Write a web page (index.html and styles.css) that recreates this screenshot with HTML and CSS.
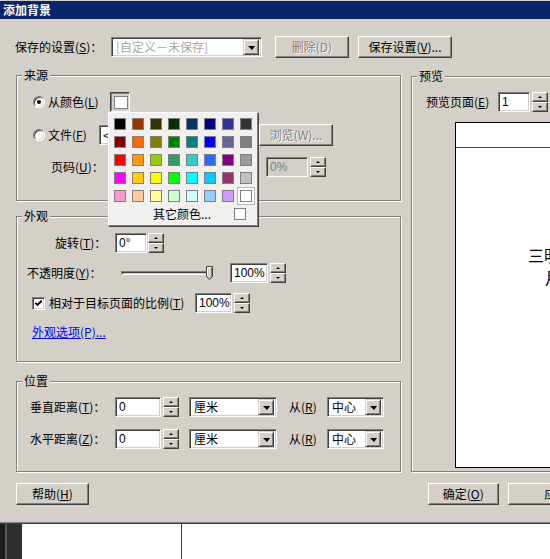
FILE: index.html
```html
<!DOCTYPE html>
<html>
<head>
<meta charset="utf-8">
<title>添加背景</title>
<link rel="stylesheet" href="styles.css">
</head>
<body>
<div class="window">
  <div class="titlebar">添加背景</div>
  <div class="client">
    <div class="toprow">
      <span class="lbl-saved">保存的设置(<u>S</u>)：</span>
      <div class="combo sunken combo-saved"><span class="ctext ctext-dis">[自定义－未保存]</span><span class="ddbtn"><i class="tri"></i></span></div>
      <button class="btn btn-del"><span class="dis">删除(D)</span></button>
      <button class="btn btn-save">保存设置(<u>V</u>)...</button>
    </div>

    <div class="main">
      <div class="leftcol">
        <fieldset class="group g-source">
          <legend class="legend">来源</legend>
          <div class="row r-color">
            <span class="radio"><span class="dot"></span></span>
            <span class="opt-label ol-color">从颜色(<u>L</u>)</span>
            <div class="colorbtn">
              <span class="colorbtn-sw"></span>
              <div class="palette">
                <div class="swatches">
                  <span class="sw" style="background:#000000"></span>
                  <span class="sw" style="background:#993300"></span>
                  <span class="sw" style="background:#333300"></span>
                  <span class="sw" style="background:#003300"></span>
                  <span class="sw" style="background:#003366"></span>
                  <span class="sw" style="background:#000080"></span>
                  <span class="sw" style="background:#333399"></span>
                  <span class="sw" style="background:#333333"></span>
                  <span class="sw" style="background:#800000"></span>
                  <span class="sw" style="background:#ff6600"></span>
                  <span class="sw" style="background:#808000"></span>
                  <span class="sw" style="background:#008000"></span>
                  <span class="sw" style="background:#008080"></span>
                  <span class="sw" style="background:#0000ff"></span>
                  <span class="sw" style="background:#666699"></span>
                  <span class="sw" style="background:#808080"></span>
                  <span class="sw" style="background:#ff0000"></span>
                  <span class="sw" style="background:#ff9900"></span>
                  <span class="sw" style="background:#99cc00"></span>
                  <span class="sw" style="background:#339966"></span>
                  <span class="sw" style="background:#33cccc"></span>
                  <span class="sw" style="background:#3366ff"></span>
                  <span class="sw" style="background:#800080"></span>
                  <span class="sw" style="background:#999999"></span>
                  <span class="sw" style="background:#ff00ff"></span>
                  <span class="sw" style="background:#ffcc00"></span>
                  <span class="sw" style="background:#ffff00"></span>
                  <span class="sw" style="background:#00ff00"></span>
                  <span class="sw" style="background:#00ffff"></span>
                  <span class="sw" style="background:#00ccff"></span>
                  <span class="sw" style="background:#993366"></span>
                  <span class="sw" style="background:#c0c0c0"></span>
                  <span class="sw" style="background:#ff99cc"></span>
                  <span class="sw" style="background:#ffcc99"></span>
                  <span class="sw" style="background:#ffff99"></span>
                  <span class="sw" style="background:#ccffcc"></span>
                  <span class="sw" style="background:#ccffff"></span>
                  <span class="sw" style="background:#99ccff"></span>
                  <span class="sw" style="background:#cc99ff"></span>
                  <span class="sw sw-sel" style="background:#ffffff"></span>
                </div>
                <div class="pal-more">
                  <span class="pal-more-text">其它颜色...</span>
                  <span class="pal-more-sw"></span>
                </div>
              </div>
            </div>
          </div>
          <div class="row r-file">
            <span class="radio"></span>
            <span class="opt-label ol-file">文件(<u>F</u>)</span>
            <div class="field sunken f-file"><span class="ftext">&lt;无&gt;</span></div>
            <button class="btn btn-browse"><span class="dis">浏览(W)...</span></button>
          </div>
          <div class="row r-page">
            <span class="lbl-page">页码(<u>U</u>)：</span>
            <div class="field sunken field-dis f-pct"><span class="ftext dis-plain">0%</span></div>
            <div class="spin"><span class="spin-btn"><i class="up"></i></span><span class="spin-btn"><i class="down"></i></span></div>
          </div>
        </fieldset>

        <fieldset class="group g-look">
          <legend class="legend">外观</legend>
          <div class="row r-rot">
            <span class="lbl-rot">旋转(<u>T</u>)：</span>
            <div class="field sunken f-rot"><span class="ftext">0°</span></div>
            <div class="spin spin-gap1"><span class="spin-btn"><i class="up"></i></span><span class="spin-btn"><i class="down"></i></span></div>
          </div>
          <div class="row r-opa">
            <span class="lbl-opa">不透明度(<u>Y</u>)：</span>
            <div class="slider">
              <span class="track"></span>
              <svg class="thumb" width="7" height="14" viewBox="0 0 7 14"><path d="M0.5 0.5H6.5V10.5L3.5 13.5L0.5 10.5Z" fill="#d4d0c8" stroke="#404040"/><path d="M1.5 10V1.5H5.5" fill="none" stroke="#ffffff"/><path d="M5.5 1.5V10.2L3.5 12.2" fill="none" stroke="#808080"/></svg>
            </div>
            <div class="field sunken f-opa"><span class="ftext">100%</span></div>
            <div class="spin spin-gap2"><span class="spin-btn"><i class="up"></i></span><span class="spin-btn"><i class="down"></i></span></div>
          </div>
          <div class="row r-chk">
            <span class="checkbox"><svg width="7" height="7" viewBox="0 0 7 7"><path d="M0.3 2.8L2.5 5L6.8 0.7" fill="none" stroke="#000" stroke-width="1.9"/></svg></span>
            <span class="lbl-chk">相对于目标页面的比例(<u>T</u>)</span>
            <div class="field sunken f-scale"><span class="ftext">100%</span></div>
            <div class="spin spin-gap2"><span class="spin-btn"><i class="up"></i></span><span class="spin-btn"><i class="down"></i></span></div>
          </div>
          <div class="row r-link">
            <a class="link" href="#">外观选项(P)...</a>
          </div>
        </fieldset>

        <fieldset class="group g-pos">
          <legend class="legend">位置</legend>
          <div class="row r-pos1">
            <span class="lbl-pos">垂直距离(<u>T</u>)：</span>
            <div class="field sunken f-dist"><span class="ftext">0</span></div>
            <div class="spin spin-gap2"><span class="spin-btn"><i class="up"></i></span><span class="spin-btn"><i class="down"></i></span></div>
            <div class="combo sunken combo-unit"><span class="ctext">厘米</span><span class="ddbtn"><i class="tri"></i></span></div>
            <span class="lbl-from">从(<u>R</u>)</span>
            <div class="combo sunken combo-from"><span class="ctext">中心</span><span class="ddbtn"><i class="tri"></i></span></div>
          </div>
          <div class="row r-pos2">
            <span class="lbl-pos">水平距离(<u>Z</u>)：</span>
            <div class="field sunken f-dist"><span class="ftext">0</span></div>
            <div class="spin spin-gap2"><span class="spin-btn"><i class="up"></i></span><span class="spin-btn"><i class="down"></i></span></div>
            <div class="combo sunken combo-unit"><span class="ctext">厘米</span><span class="ddbtn"><i class="tri"></i></span></div>
            <span class="lbl-from">从(<u>R</u>)</span>
            <div class="combo sunken combo-from"><span class="ctext">中心</span><span class="ddbtn"><i class="tri"></i></span></div>
          </div>
        </fieldset>
      </div>

      <fieldset class="group g-preview">
        <legend class="legend">预览</legend>
        <div class="row r-prev">
          <span class="lbl-prev">预览页面(<u>E</u>)</span>
          <div class="field sunken f-page"><span class="ftext">1</span></div>
          <div class="spin spin-gap2"><span class="spin-btn"><i class="up"></i></span><span class="spin-btn"><i class="down"></i></span></div>
        </div>
        <div class="page">
          <div class="page-head"></div>
          <div class="page-text">
            <div class="pt1">三明</div>
            <div class="pt2">月</div>
          </div>
        </div>
      </fieldset>
    </div>

    <div class="bottomrow">
      <button class="btn btn-help">帮助(<u>H</u>)</button>
      <button class="btn btn-ok">确定(<u>O</u>)</button>
      <button class="btn btn-cancel">应用(<u>A</u>)</button>
    </div>
  </div>
</div>
<div class="below">
  <span class="bl1"></span><span class="bl2"></span><span class="bl3"></span>
  <div class="bl4"><span class="bl-line"></span></div>
</div>
</body>
</html>
```

FILE: styles.css
```css
* { box-sizing: border-box; }
html, body { margin: 0; padding: 0; }
body {
  width: 550px;
  height: 559px;
  overflow: hidden;
  background: #d4d0c8;
  font: 12px/14px "Noto Sans CJK SC", "Liberation Sans", sans-serif;
  color: #000;
}
u { text-decoration: underline; }

.window {
  width: 620px;
  height: 524px;
  padding-top: 1px;
  background: #d4d0c8;
  border-bottom: 1px solid #404040;
  box-shadow: inset 0 -1px 0 #808080;
}
.titlebar {
  height: 18px;
  line-height: 18px;
  background: #0a246a;
  color: #fff;
  font-weight: bold;
  padding-left: 3px;
}
.client { padding: 17px 0 0 16px; }

/* 3D styles */
.sunken {
  border: 1px solid;
  border-color: #808080 #fff #fff #808080;
  box-shadow: inset 1px 1px 0 #404040, inset -1px -1px 0 #d4d0c8;
}
.btn {
  height: 22px;
  margin: 0;
  padding: 0;
  font: inherit;
  color: #000;
  background: #d4d0c8;
  border: 1px solid;
  border-color: #fff #404040 #404040 #fff;
  box-shadow: inset -1px -1px 0 #808080;
}
.dis { color: #808080; text-shadow: 1px 1px 0 #fff; }

/* top row */
.toprow { display: flex; align-items: center; height: 22px; margin-left: -1px; }
.lbl-saved { width: 96px; white-space: nowrap; }
.combo {
  display: flex;
  align-items: center;
  height: 20px;
  background: #fff;
  padding: 2px;
}
.combo-saved { width: 151px; }
.ctext { flex: 1; padding-left: 2px; white-space: nowrap; }
.ctext-dis { color: #a8a8a8; }
.ddbtn {
  width: 16px;
  height: 16px;
  flex: none;
  display: flex;
  align-items: center;
  justify-content: center;
  background: #d4d0c8;
  border: 1px solid;
  border-color: #d4d0c8 #404040 #404040 #d4d0c8;
  box-shadow: inset 1px 1px 0 #fff, inset -1px -1px 0 #808080;
}
.tri {
  width: 0; height: 0;
  border-left: 4px solid transparent;
  border-right: 3px solid transparent;
  border-top: 4px solid #000;
  margin-top: 1px;
}
.btn-del { width: 74px; margin-left: 13px; }
.btn-save { width: 94px; margin-left: 9px; }

/* main */
.main { display: flex; margin-top: 10px; }
.leftcol { width: 385px; display: flex; flex-direction: column; }

.group {
  margin: 0;
  padding: 0;
  min-width: 0;
  border: 1px solid #808080;
  box-shadow: 1px 1px 0 #fff, inset 1px 1px 0 #fff;
}
.legend {
  margin-left: 5px;
  padding: 0 2px;
  line-height: 14px;
  background: #d4d0c8;
}
.g-source { height: 133px; }
.g-look { height: 153px; margin-top: 8px; }
.g-pos { height: 98px; margin-top: 12px; }
.g-preview { width: 200px; height: 403px; margin: 1px 0 0 10px; }

.row { display: flex; align-items: center; white-space: nowrap; }

/* radio / checkbox */
.radio {
  width: 12px; height: 12px;
  border-radius: 50%;
  background: #fff;
  border: 1px solid;
  border-color: #808080 #fff #fff #808080;
  box-shadow: inset 1px 1px 0 #404040, inset -1px -1px 0 #d4d0c8;
  display: flex; align-items: center; justify-content: center;
  flex: none;
}
.dot { width: 4px; height: 4px; border-radius: 50%; background: #000; }
.checkbox {
  width: 13px; height: 13px;
  background: #fff;
  border: 1px solid;
  border-color: #808080 #fff #fff #808080;
  box-shadow: inset 1px 1px 0 #404040, inset -1px -1px 0 #d4d0c8;
  display: flex; align-items: center; justify-content: center;
  flex: none;
}
.opt-label { margin-left: 3px; }

/* source */
.r-color { margin-top: 10px; height: 20px; padding-left: 16px; }
.ol-color { width: 62px; }
.colorbtn {
  position: relative;
  width: 20px; height: 20px;
  display: flex; align-items: center; justify-content: center;
  background: #d4d0c8;
  border: 1px solid;
  border-color: #404040 #fff #fff #404040;
  box-shadow: inset 1px 1px 0 #808080;
}
.colorbtn-sw { width: 14px; height: 13px; background: #fff; border: 1px solid #808080; margin: 1px 0 0 1px; }

.palette {
  position: absolute;
  left: -3px;
  top: 19px;
  z-index: 10;
  width: 150px;
  height: 114px;
  background: #f1f0ee;
  border: 1px solid;
  border-color: #fff #808080 #808080 #fff;
  box-shadow: 1px 1px 0 #404040;
  padding: 5px 4px 0 5px;
}
.swatches {
  display: grid;
  grid-template-columns: repeat(8, 12px);
  grid-auto-rows: 12px;
  gap: 6px;
}
.sw { border: 1px solid #808080; }
.sw-sel { box-shadow: 0 0 0 2px #fff, 0 0 0 3px #b8b8b8; }
.pal-more { display: flex; align-items: center; height: 12px; margin-top: 6px; }
.pal-more-text { margin-left: 39px; }
.pal-more-sw { width: 12px; height: 12px; background: #fff; border: 1px solid #808080; margin-left: auto; margin-right: 7px; }

.r-file { margin-top: 12px; height: 22px; padding-left: 16px; }
.ol-file { width: 51px; }
.field {
  height: 20px;
  background: #fff;
  display: flex;
  align-items: center;
  padding: 0 2px;
  font-family: "Liberation Sans", "Noto Sans CJK SC", sans-serif;
}
.ftext { padding-left: 1px; }
.f-file { width: 151px; font-family: "Noto Sans CJK SC", sans-serif; }
.btn-browse { width: 74px; margin-left: 9px; }

.r-page { margin-top: 11px; height: 20px; padding-left: 34px; }
.lbl-page { width: 215px; }
.field-dis { background: #d4d0c8; }
.dis-plain { color: #808080; }
.f-pct { width: 42px; }

.spin { display: flex; flex-direction: column; width: 16px; height: 20px; margin-left: 2px; flex: none; }
.spin-gap1 { margin-left: 1px; }
.spin-gap2 { margin-left: 2px; }
.spin-btn {
  flex: 1;
  display: flex; align-items: center; justify-content: center;
  background: #d4d0c8;
  border: 1px solid;
  border-color: #fff #404040 #404040 #fff;
  box-shadow: inset -1px -1px 0 #808080;
}
.up {
  width: 0; height: 0;
  border-left: 2px solid transparent;
  border-right: 2px solid transparent;
  border-bottom: 2px solid #000;
}
.down {
  width: 0; height: 0;
  border-left: 2px solid transparent;
  border-right: 2px solid transparent;
  border-top: 2px solid #000;
}

/* appearance */
.r-rot { margin-top: 10px; height: 20px; padding-left: 38px; }
.lbl-rot { width: 60px; }
.f-rot { width: 32px; }

.r-opa { margin-top: 10px; height: 20px; padding-left: 10px; }
.lbl-opa { width: 94px; }
.slider { width: 92px; height: 20px; display: flex; align-items: center; }
.track {
  width: 92px;
  height: 4px;
  border: 1px solid;
  border-color: #808080 #fff #fff #808080;
  box-shadow: inset 1px 1px 0 #404040;
}
.thumb { margin-left: -7px; flex: none; }
.f-opa { width: 38px; margin-left: 17px; }

.r-chk { margin-top: 10px; height: 20px; padding-left: 15px; }
.lbl-chk { width: 146px; margin-left: 4px; }
.f-scale { width: 37px; }

.r-link { margin-top: 12px; height: 14px; padding-left: 15px; }
.link { color: #0000ff; text-decoration: underline; }

/* position */
.r-pos1 { margin-top: 9px; height: 20px; padding-left: 13px; }
.r-pos2 { margin-top: 12px; height: 20px; padding-left: 13px; }
.lbl-pos { width: 85px; }
.f-dist { width: 46px; }
.combo-unit { width: 88px; margin-left: 10px; }
.lbl-from { width: 38px; margin-left: 12px; }
.combo-from { width: 57px; }

/* preview */
.r-prev { margin-top: 9px; height: 20px; padding-left: 14px; }
.lbl-prev { width: 72px; }
.f-page { width: 32px; }
.page {
  margin: 10px 0 0 43px;
  width: 150px;
  height: 346px;
  background: #fff;
  border: 1px solid #000;
}
.page-head { height: 25px; border-bottom: 1px solid #5a3a2a; }
.page-text { margin: 96px 0 0 72px; font-size: 16px; line-height: 22px; white-space: nowrap; }
.pt2 { padding-left: 17px; }

/* bottom buttons */
.bottomrow { display: flex; margin-top: 11px; }
.btn-help { width: 74px; }
.btn-ok { width: 72px; margin-left: 339px; }
.btn-cancel { width: 114px; margin-left: 9px; }

/* area below dialog */
.below { display: flex; height: 35px; }
.bl1 { width: 5px; background: #1c1c1c; }
.bl2 { width: 2px; background: #5a5a5a; }
.bl3 { width: 15px; background: #2e2e2e; }
.bl4 { flex: 1; background: #fff; display: flex; }
.bl-line { width: 1px; margin-left: 159px; background: #6b2b1b; }
```
